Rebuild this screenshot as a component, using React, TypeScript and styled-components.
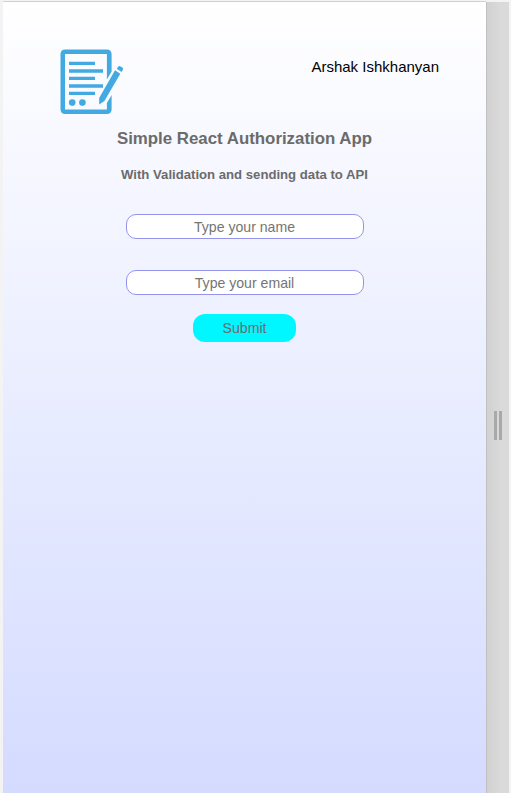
import React from "react";
import styled, { createGlobalStyle } from "styled-components";

const GlobalStyle = createGlobalStyle`
  *, *::before, *::after { box-sizing: border-box; }
  html, body, #root { height: 100%; }
  body {
    margin: 0;
    overflow: hidden;
    background: #f3f3f4;
    font-family: "Liberation Sans", Arial, sans-serif;
  }
`;

const Viewport = styled.div`
  display: grid;
  grid-template-columns: 483px 23px;
  height: 100vh;
  padding: 1px 0 0 3px;
`;

const Screen = styled.main`
  display: flex;
  flex-direction: column;
  align-items: center;
  border-top: 1px solid #d0d0d2;
  background: linear-gradient(#ffffff, #d4dbff);
`;

const Header = styled.header`
  display: flex;
  justify-content: space-between;
  width: 100%;
  height: 127px;
  padding: 47px 47px 0 57px;
`;

const Logo = styled.svg`
  width: 64px;
  height: 66px;
`;

const Author = styled.span`
  margin-top: 9px;
  font-size: 15px;
  line-height: 18px;
  color: #000;
`;

const Title = styled.h1`
  margin: 0;
  font-size: 16.85px;
  line-height: 20px;
  color: #6b6b6b;
`;

const Subtitle = styled.h2`
  margin: 18px 0 31px;
  font-size: 13.15px;
  line-height: 16px;
  color: #6b6b6b;
`;

const Form = styled.form`
  display: flex;
  flex-direction: column;
  align-items: center;
`;

const Field = styled.input`
  width: 238px;
  height: 25px;
  margin-bottom: 31px;
  padding: 1px 2px;
  border: 1px solid #9494ee;
  border-radius: 10px;
  background: #fff;
  font: 14.1px "Liberation Sans", Arial, sans-serif;
  text-align: center;
  outline: none;

  &::placeholder { color: #757575; opacity: 1; }
  & + & { margin-bottom: 19px; }
`;

const Submit = styled.button`
  width: 103px;
  height: 28px;
  padding: 0;
  border: 0;
  border-radius: 12px;
  background: #00f7ff;
  font: 14.1px "Liberation Sans", Arial, sans-serif;
  color: #6b6b6b;
`;

const Resizer = styled.div`
  display: flex;
  align-items: center;
  justify-content: center;
  gap: 2px;
  margin-top: 1px;
  border-left: 1px solid #c0c0c0;
  background: linear-gradient(90deg, #d1d1d1, #dadada 14px);
`;

const Grip = styled.span`
  width: 3px;
  height: 29px;
  margin-top: 55px;
  background: #a9a9a9;
`;

function FormLogo() {
  return (
    <Logo viewBox="0 0 64 66" fill="#42a9e1" aria-hidden="true">
      <path d="M51.6 22.5V5.2Q51.6 0.5 46.9 0.5H5.2Q0.5 0.5 0.5 5.2V60.3Q0.5 65 5.2 65H46.9Q51.6 65 51.6 60.3V46L46.9 54V60.5H5V5H46.9V30.5Z" />
      <path
        d="M9 14.3H35M9 22H43M9 29.3H35M9 37H43M9 44.3H35"
        fill="none"
        stroke="#42a9e1"
        strokeWidth="3.3"
      />
      <circle cx="12.2" cy="53.6" r="3.3" />
      <circle cx="22.4" cy="53.6" r="3.3" />
      <path d="M55 21.2L60.3 24.8L44.4 52L39.2 55.4L39.2 49Z" />
      <path d="M58.3 17.6Q59 16.5 60.2 17.2L62.6 18.8Q63.7 19.5 63 20.6L61.5 22.9L56.8 19.8Z" />
    </Logo>
  );
}

export default function App() {
  return (
    <>
      <GlobalStyle />
      <Viewport>
        <Screen>
          <Header>
            <FormLogo />
            <Author>Arshak Ishkhanyan</Author>
          </Header>
          <Title>Simple React Authorization App</Title>
          <Subtitle>With Validation and sending data to API</Subtitle>
          <Form onSubmit={(event) => event.preventDefault()}>
            <Field type="text" placeholder="Type your name" />
            <Field type="email" placeholder="Type your email" />
            <Submit type="submit">Submit</Submit>
          </Form>
        </Screen>
        <Resizer>
          <Grip />
          <Grip />
        </Resizer>
      </Viewport>
    </>
  );
}
